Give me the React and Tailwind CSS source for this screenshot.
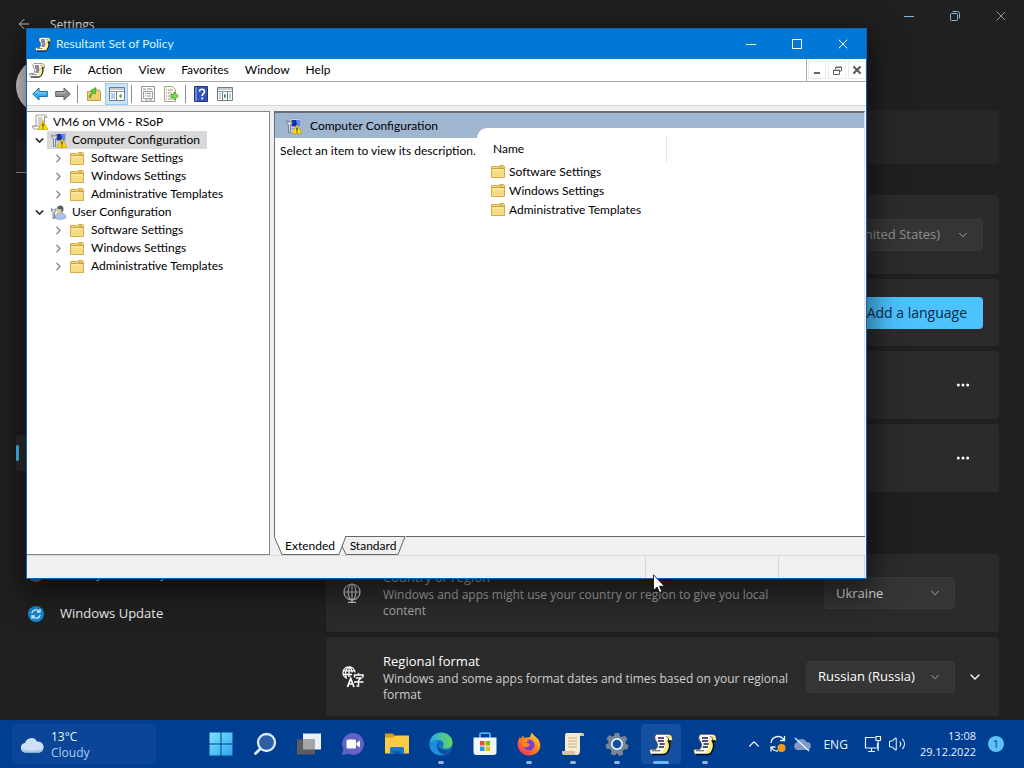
import clsx from "clsx";
import {
  ArrowLeft,
  ChevronDown,
  ChevronRight,
  ChevronUp,
  Ellipsis,
  Volume2,
  X,
} from "lucide-react";

function ScrollIcon({ className }) {
  return (
    <svg viewBox="0 0 32 32" className={className} aria-hidden="true">
      <path
        d="M10 3h15c4 0 6 2 6 6v3h-4c2 4 2 8-1 12-1 4-3 6-7 6H5c-3 0-4-2-4-5v-2h8c3-4 3-6 1-10-3-4-3-8 0-10z"
        fill="#fffdf2"
        stroke="#3a3a44"
        strokeWidth="1"
      />
      <path d="M20 11h5c3 5 2 9-1 13-1 3-2 5-6 5 0-3 1-4 2-6 3-4 2-8 0-12z" fill="#f5f070" />
      <path d="M24 4c4 0 6 2 6 7h-4c0-3 0-5-2-7z" fill="#f5f070" />
      <path d="M30 12h-4c3 5 2 8 0 12-1 4-4 6-7 6H4" stroke="#0a0a14" strokeWidth="2" fill="none" />
      <path d="M26 11c0-3-1-5-3-5M4 25h11" stroke="#3a3a44" strokeWidth="1.2" fill="none" />
      <path d="M12 8h8M12 12h8M14 16h7M13 20h7" stroke="#1c1560" strokeWidth="2.2" />
    </svg>
  );
}

function Warning() {
  return (
    <g>
      <path d="M22 13l10 18H12z" fill="#ffe000" stroke="#b58a00" />
      <path d="M22 19v6M22 27v2" stroke="#222" strokeWidth="2.4" />
    </g>
  );
}

function PolicyRootIcon() {
  return (
    <svg viewBox="0 0 32 32" className="w-4 h-4 shrink-0" aria-hidden="true">
      <path d="M8 2h18c3 0 4 2 4 5h-5v17c0 4-2 6-5 6H5c-3 0-4-3-4-6h7z" fill="#f7f7ee" stroke="#8c8c80" strokeWidth="1.6" />
      <path d="M1 24h14c0 4 1 6 4 6M25 7V4" stroke="#8c8c80" strokeWidth="1.6" fill="none" />
      <path d="M12 8h9M12 12h9M12 16h7M12 20h5" stroke="#9a9a9a" strokeWidth="1.6" />
      <Warning />
    </svg>
  );
}

function ComputerIcon() {
  return (
    <svg viewBox="0 0 32 32" className="w-4 h-4 shrink-0" aria-hidden="true">
      <path d="M8 2h21v18H8z" fill="#dfe3ee" stroke="#8d94ad" />
      <path d="M11 4h16v13H11z" fill="#1430b0" />
      <path d="M20 4h7v13h-4z" fill="#5a86e8" />
      <path d="M10 23h18v6H10z" fill="#c9cede" />
      <path d="M2 5v6l3 3v15h4V14l3-3V5L9 8H5z" fill="#d8dbe2" stroke="#5b6070" strokeWidth="1.4" />
      <Warning />
    </svg>
  );
}

function UserIcon() {
  return (
    <svg viewBox="0 0 32 32" className="w-4 h-4 shrink-0" aria-hidden="true">
      <path d="M9 29c-1-8 2-11 9-11s13 4 12 9c-4 4-15 5-21 2z" fill="#a9c4ea" stroke="#6f8fc0" strokeWidth="1.2" />
      <path d="M12 11q0-6 5-6t6 6-5 8-6-8z" fill="#e3c49a" />
      <path d="M12 8c2-7 13-7 13 2 0 4-2 7-4 8 1-5 0-8-3-8-3 0-5 0-6-2z" fill="#4c6068" />
      <path d="M1 9v5l3 3v12h3V17l3-3V9l-3 3H4z" fill="#dfe2e8" stroke="#555b66" strokeWidth="1.4" />
    </svg>
  );
}

function FolderIcon() {
  return (
    <svg viewBox="0 0 14 13" className="w-[14px] h-[13px] shrink-0" aria-hidden="true">
      <path d="M.5 12.500v-11h7l1-1h4l1 1v11z" fill="#f8dc83" stroke="#d3ad49" />
      <path d="M8 3.500h5M1 3.500h6l1.500-1.500h4" stroke="#c79f3f" fill="none" />
      <path d="M1.500 5h11" stroke="#fdf0b8" />
    </svg>
  );
}

const menus = ["File", "Action", "View", "Favorites", "Window", "Help"];

const tree = [
  {
    name: "Computer Configuration",
    Icon: ComputerIcon,
    selected: true,
    children: ["Software Settings", "Windows Settings", "Administrative Templates"],
  },
  {
    name: "User Configuration",
    Icon: UserIcon,
    children: ["Software Settings", "Windows Settings", "Administrative Templates"],
  },
];

function BlueArrow() {
  return (
    <svg viewBox="0 0 16 14" className="w-4 h-[14px]" aria-hidden="true">
      <path d="M.7 7L7 1v3.500h8.300v5H7V13z" fill="#35ade8" stroke="#1f6fa8" />
      <path d="M3 6.500L6 3.500V6h8" stroke="#9be0fb" fill="none" />
    </svg>
  );
}

function GrayArrow() {
  return (
    <svg viewBox="0 0 16 14" className="w-4 h-[14px]" aria-hidden="true">
      <path d="M15.300 7L9 1v3.500H.7v5H9V13z" fill="#8f8f8f" stroke="#5f5f5f" />
      <path d="M1.500 6H10V3.500" stroke="#bdbdbd" fill="none" />
    </svg>
  );
}

function UpFolder() {
  return (
    <svg viewBox="0 0 16 16" className="w-4 h-4" aria-hidden="true">
      <path d="M1.500 14.500v-9h6l1-1.500h5l1 1.500v9z" fill="#f0cf72" stroke="#c49c45" />
      <path d="M3 11c1-3 2-4 3.500-5L4.500 4.500 10 1.500 9.500 8 8 7c-2 1-3 2-3.500 5z" fill="#5fce3a" stroke="#2f8c1c" strokeWidth=".6" />
    </svg>
  );
}

function PaneIcon({ right }) {
  return (
    <svg viewBox="0 0 16 14" className="w-4 h-[14px]" aria-hidden="true">
      <path d="M.5.5h15v13H.5z" fill="#fff" stroke="#6f7c88" />
      <path d="M1 2h14M1 4.500h14" stroke="#8a96a2" />
      {right ? (
        <>
          <path d="M5.500 5v8M10.500 5v8" stroke="#6f7c88" />
          <path d="M2 7h2M2 9h2M2 11h2M12 7h2M12 9h2M12 11h2" stroke="#8b98a4" />
          <path d="M7 6.500L9.500 9 7 11.500z" fill="#3a9c4a" />
        </>
      ) : (
        <>
          <path d="M7.500 5v8" stroke="#6f7c88" />
          <path d="M2 7h4M2 9h4M2 11h4" stroke="#5c9fd8" />
          <path d="M12.500 6.500L10 9l2.500 2.500z" fill="#3a9c4a" />
        </>
      )}
    </svg>
  );
}

function PropertiesIcon() {
  return (
    <svg viewBox="0 0 16 16" className="w-4 h-4" aria-hidden="true">
      <path d="M1.500.5h13v15h-13z" fill="#fbfbfb" stroke="#9a9a9a" />
      <path d="M3.500 5.500h9v7h-9z" stroke="#a0a0a0" fill="none" />
      <path d="M3 3h3M7 3h5M5 7.500h1M7 7.500h4M5 10h1M7 10h4M5 14h3M9 14h3" stroke="#8e9399" />
    </svg>
  );
}

function ExportIcon() {
  return (
    <svg viewBox="0 0 16 16" className="w-4 h-4" aria-hidden="true">
      <path d="M1.500.5h8l3 3v12h-11z" fill="#fdfbe8" stroke="#a6a694" />
      <path d="M3 4h1M5 4h5M3 7h1M5 7h4M3 10h1M5 10h3M3 13h1M5 13h5" stroke="#9a9a9a" />
      <path d="M8 8.500h3V6l4.500 4-4.500 4v-2.500H8z" fill="#7fdc4a" stroke="#3c9a20" strokeWidth=".8" />
    </svg>
  );
}

function HelpIcon() {
  return (
    <svg viewBox="0 0 14 16" className="w-[14px] h-4" aria-hidden="true">
      <path d="M.5.5h13v15H.5z" fill="#3453b4" stroke="#1f3580" />
      <path d="M1 1h2v14H1z" fill="#7289d6" />
      <path d="M5.500 5.500c0-3 5-3 5 0 0 2-2.300 2-2.300 4.500M8.200 11.500v2" stroke="#fff" strokeWidth="1.700" fill="none" />
    </svg>
  );
}

function Separator() {
  return <span className="w-px h-[18px] mx-[3px] bg-[#8c8c8c]" />;
}

function ToolButton({ label, active, children }) {
  return (
    <button
      aria-label={label}
      className={clsx(
        "w-[23px] h-[22px] flex items-center justify-center",
        active && "bg-[#cce4f7] border border-[#99c9ef]",
      )}
    >
      {children}
    </button>
  );
}

function TreeRow({ children, className }) {
  return <div className={clsx("h-[18px] flex items-center whitespace-nowrap", className)}>{children}</div>;
}

function TreePane() {
  return (
    <nav className="w-[243px] shrink-0 bg-white border border-[#828790] border-l-0 pt-px">
      <TreeRow className="pl-[5px] gap-[5px]">
        <PolicyRootIcon />
        <span>VM6 on VM6 - RSoP</span>
      </TreeRow>
      <ul>
        {tree.map(({ name, Icon, selected, children }) => (
          <li key={name}>
            <TreeRow className="pl-[6px]">
              <button aria-label={`Collapse ${name}`}>
                <ChevronDown size={13} strokeWidth={3} className="text-[#333]" />
              </button>
              <button
                className={clsx("h-[18px] flex items-center gap-[5px] pl-1 pr-[7px] ml-px", selected && "bg-[#d9d9d9]")}
              >
                <Icon />
                {name}
              </button>
            </TreeRow>
            <ul>
              {children.map((child) => (
                <li key={child}>
                  <TreeRow className="pl-[25px] gap-[5px]">
                    <button aria-label={`Expand ${child}`}>
                      <ChevronRight size={13} strokeWidth={2.5} className="text-[#8a8a8a]" />
                    </button>
                    <button className="flex items-center gap-[7px]">
                      <FolderIcon />
                      {child}
                    </button>
                  </TreeRow>
                </li>
              ))}
            </ul>
          </li>
        ))}
      </ul>
    </nav>
  );
}

function ResultPane() {
  return (
    <section className="flex-1 min-w-0 flex flex-col mr-px">
      <div className="flex-1 flex bg-[#9fb6d1] border-t-2 border-l border-[#696e78] border-r border-r-[#e3e3e3]">
        <div className="w-[202px] shrink-0 flex flex-col">
          <h2 className="h-[25px] flex items-center gap-2 pl-[11px]">
            <ComputerIcon />
            Computer Configuration
          </h2>
          <p className="flex-1 bg-white pl-[5px] pt-1 whitespace-nowrap leading-[18px]">
            Select an item to view its description.
          </p>
        </div>
        <div className="flex-1 flex mt-[15px] bg-white rounded-tl-[10px]">
          <table className="self-start mt-2 ml-3 text-left">
            <thead>
              <tr>
                <th className="h-[26px] w-[177px] p-0 pl-1 font-normal border-r border-[#e5e5e5]">Name</th>
              </tr>
            </thead>
            <tbody>
              {tree[0].children.map((name) => (
                <tr key={name}>
                  <td className="p-0">
                    <span className="h-[19px] flex items-center gap-1 ml-[2px]">
                      <FolderIcon />
                      {name}
                    </span>
                  </td>
                </tr>
              ))}
            </tbody>
          </table>
        </div>
      </div>
      <div className="h-[19px] flex bg-[#f0f0f0]">
        <button className="relative z-10 w-[72px]">
          <svg viewBox="0 0 72 19" className="absolute inset-0 w-full h-full" aria-hidden="true">
            <path d="M0 0l8 18.500h57L72 0z" fill="#fff" />
            <path d="M0 0l8 18.500h57L72 0" fill="none" stroke="#666" />
          </svg>
          <span className="relative">Extended</span>
        </button>
        <button className="relative -ml-[6px] w-[66px]">
          <svg viewBox="0 0 66 19" className="absolute inset-0 w-full h-full" aria-hidden="true">
            <path d="M1 8l5 10.500h52L65 .5H5" fill="#f0f0f0" stroke="#666" />
          </svg>
          <span className="relative">Standard</span>
        </button>
        <span className="flex-1 border-t border-[#666]" />
      </div>
    </section>
  );
}

function PolicyWindow() {
  return (
    <div className="absolute left-[26px] top-[28px] w-[841px] h-[551px] flex flex-col bg-[#f0f0f0] border border-[#0e62b0] text-black text-[12px] font-['Lato','Open_Sans',sans-serif] shadow-[0_10px_28px_6px_rgba(0,0,0,0.5)]">
      <header className="h-[30px] shrink-0 flex items-center bg-[#0078d7] text-[#d9f4ff] pl-2">
        <ScrollIcon className="w-4 h-4" />
        <h1 className="ml-[5px] flex-1">Resultant Set of Policy</h1>
        <button aria-label="Minimize" className="w-[46px] flex justify-center">
          <span className="w-[10px] h-px bg-white" />
        </button>
        <button aria-label="Maximize" className="w-[46px] flex justify-center">
          <span className="w-[10px] h-[10px] border border-white" />
        </button>
        <button aria-label="Close" className="w-[46px] flex justify-center">
          <X size={16} strokeWidth={1.5} className="text-white" />
        </button>
      </header>

      <div className="h-[23px] shrink-0 flex items-center bg-white border-b border-[#a9a9a9] pl-[2px]">
        <ScrollIcon className="w-4 h-4" />
        {menus.map((m) => (
          <button key={m} className="px-2">
            {m}
          </button>
        ))}
        <div className="ml-auto self-stretch flex items-center gap-[2px] border-l border-[#a9a9a9] text-[#555] pl-px">
          <button aria-label="Minimize child window" className="w-[18px] h-[18px] border border-[#ececec] flex items-end justify-center pb-1">
            <span className="w-[6px] h-[2px] bg-[#666]" />
          </button>
          <button aria-label="Restore child window" className="w-[18px] h-[18px] border border-[#ececec] flex items-center justify-center">
            <svg viewBox="0 0 9 9" className="w-[9px] h-[9px]" fill="none" stroke="#666">
              <path d="M2.500 3V1h6v4H6.500M.5 4h6v4.500h-6zM.5 4.500h6M2.500 1.500h6" />
            </svg>
          </button>
          <button aria-label="Close child window" className="w-[18px] h-[18px] border border-[#ececec] flex items-center justify-center">
            <X size={12} strokeWidth={4} />
          </button>
        </div>
      </div>

      <div className="h-[24px] shrink-0 flex items-center bg-white border-b border-[#d5d5d5] pl-px pt-px">
        <ToolButton label="Back"><BlueArrow /></ToolButton>
        <ToolButton label="Forward"><GrayArrow /></ToolButton>
        <Separator />
        <span className="w-px" />
        <ToolButton label="Up one level"><UpFolder /></ToolButton>
        <ToolButton label="Show console tree" active><PaneIcon /></ToolButton>
        <Separator />
        <span className="w-px" />
        <ToolButton label="Properties"><PropertiesIcon /></ToolButton>
        <ToolButton label="Export list"><ExportIcon /></ToolButton>
        <Separator />
        <ToolButton label="Help"><HelpIcon /></ToolButton>
        <span className="w-px" />
        <ToolButton label="Show action pane"><PaneIcon right /></ToolButton>
      </div>

      <div className="flex-1 min-h-0 flex gap-1 pt-[5px]">
        <TreePane />
        <ResultPane />
      </div>

      <footer className="h-[23px] shrink-0 flex border-t border-[#dadada] pr-px">
        <span className="flex-1 border-r border-[#d7d7d7]" />
        <span className="w-[133px] border-r border-[#d7d7d7]" />
        <span className="w-[86px] border-r border-[#d7d7d7]" />
      </footer>
    </div>
  );
}

function Dropdown({ label, value, className }) {
  return (
    <label className={clsx("relative flex items-center h-8", className)}>
      <select
        aria-label={label}
        className="appearance-none w-full h-8 pl-[11px] pr-9 pt-px rounded bg-[#353535] border border-[#3a3a3a] text-[13px]"
      >
        <option>{value}</option>
      </select>
      <ChevronDown size={14} strokeWidth={1.5} className="absolute right-[13px] pointer-events-none text-[#b5b5b5]" />
    </label>
  );
}

function Card({ className, children }) {
  return (
    <div className={clsx("shrink-0 flex items-center bg-[#2b2b2b] rounded-[4px]", className)}>
      {children}
    </div>
  );
}

function GlobeIcon() {
  return (
    <svg viewBox="0 0 20 20" className="w-5 h-5 shrink-0 text-[#cfcfcf]" fill="none" stroke="currentColor" strokeWidth="1.2">
      <circle cx="10" cy="9" r="8" />
      <ellipse cx="10" cy="9" rx="3.800" ry="8" />
      <path d="M2 9h16M10 1v18M6 19.300h8" />
    </svg>
  );
}

function RegionalIcon() {
  return (
    <svg viewBox="0 0 22 22" className="w-[22px] h-[22px] shrink-0" fill="none" stroke="#fff" strokeWidth="1.300">
      <path d="M5 12.500A6 6 0 1 1 13 6.500M1.500 4.800h11M1 8.500h9M7 1v10M4.300 11.500c-1.500-5-.5-9 2.700-10.500 2 1 3 3 3 5.500" />
      <path d="M5.500 21l3.200-8.500L12 21M6.600 18h4.400" strokeWidth="1.700" />
      <path d="M16.500 7v2M12.500 11.500V9h8.500v2.500M14 12h5l-2.500 2.500V20h-2M12 16h9.500" strokeWidth="1.500" />
    </svg>
  );
}

function SettingsWindow() {
  return (
    <main className="flex-1 min-h-0 flex flex-col overflow-hidden bg-[#202020] text-white">
      <header className="h-12 shrink-0 flex items-center pl-4">
        <button aria-label="Back">
          <ArrowLeft size={16} strokeWidth={1.5} className="text-[#c4c4c4]" />
        </button>
        <span className="ml-[18px] pt-[2px] text-[12px] text-[#e6e6e6]">Settings</span>
        <div className="ml-auto self-start h-8 flex items-center text-[#a9b6c4]">
          <button aria-label="Minimize Settings" className="w-[46px] flex justify-center">
            <span className="w-[10px] h-px bg-[#7fb2de]" />
          </button>
          <button aria-label="Restore Settings" className="w-[46px] flex justify-center">
            <svg viewBox="0 0 10 10" className="w-[10px] h-[10px]" fill="none" stroke="#8db4d8">
              <path d="M2.500.5h5a2 2 0 0 1 2 2v5" />
              <rect x=".5" y="2.500" width="7" height="7" rx="1" />
            </svg>
          </button>
          <button aria-label="Close Settings" className="w-[46px] flex justify-center">
            <X size={16} strokeWidth={1.2} />
          </button>
        </div>
      </header>

      <div className="flex-1 min-h-0 flex">
        <aside className="w-[326px] shrink-0 pl-4 pr-5 pt-[10px] text-[13px]">
          <div className="w-14 h-14 rounded-full bg-[#d4d4d4]" />
          <div className="mt-[27px] h-8 bg-[#262626] border-b border-[#9a9a9a]" />
          <nav className="mt-[262px] flex flex-col">
            <div className="h-9 flex items-center rounded bg-[#2d2d2d]">
              <span className="w-[3px] h-4 rounded-full bg-[#4cc2ff]" />
            </div>
            <button className="mt-[85px] h-9 flex items-center gap-4 pl-3 text-[#e0e0e0]">
              <span className="w-4 h-4 rounded-full bg-[#2f6ea6]" />
              Privacy &amp; security
            </button>
            <button className="mt-1 h-9 flex items-center gap-4 pl-3 text-[#f0f0f0]">
              <svg viewBox="0 0 16 16" className="w-4 h-4" fill="none" aria-hidden="true">
                <circle cx="8" cy="8" r="8" fill="#1687cf" />
                <path d="M3.800 7.200A4.300 4.300 0 0 1 11.500 5.600M12.200 8.800A4.300 4.300 0 0 1 4.500 10.400" stroke="#d8f3ff" strokeWidth="1.300" />
                <path d="M12 3v3H9M4 13v-3h3" stroke="#d8f3ff" strokeWidth="1.300" />
              </svg>
              Windows Update
            </button>
          </nav>
        </aside>

        <section className="flex-1 min-w-0 flex flex-col pt-[62px] pr-[25px]">
          <Card className="h-[54px] mb-[31px] bg-[#272727]" />
          <Card className="h-[79px] mb-[5px] justify-end pr-4">
            <Dropdown label="Windows display language" value="English (United States)" className="w-[190px] text-[#909090]" />
          </Card>
          <Card className="h-[67px] mb-[5px] justify-end pr-4">
            <button className="h-8 px-4 rounded bg-[#4cc2ff] text-[14px] text-[#0a2b40]">Add a language</button>
          </Card>
          {["First language", "Second language"].map((l) => (
            <Card key={l} className="h-[68px] mb-[5px] justify-end pr-7">
              <button aria-label={`${l} options`}>
                <Ellipsis size={16} strokeWidth={2.5} />
              </button>
            </Card>
          ))}
          <Card className="h-[78px] mt-[57px] mb-[5px] pl-4 pr-11">
            <GlobeIcon />
            <div className="ml-[21px] flex-1 text-[#a8a8a8]">
              <h3 className="text-[13px] leading-5">Country or region</h3>
              <p className="max-w-[410px] text-[12px] leading-4">
                Windows and apps might use your country or region to give you local content
              </p>
            </div>
            <Dropdown label="Country or region" value="Ukraine" className="w-[131px] text-[#dcdcdc]" />
          </Card>
          <Card className="h-[79px] pl-4 pr-4">
            <RegionalIcon />
            <div className="ml-[19px] flex-1">
              <h3 className="text-[13px] leading-5">Regional format</h3>
              <p className="max-w-[410px] text-[12px] leading-4 text-[#cfcfcf]">
                Windows and some apps format dates and times based on your regional format
              </p>
            </div>
            <Dropdown label="Regional format" value="Russian (Russia)" className="w-[149px]" />
            <button aria-label="Expand regional format" className="ml-3">
              <ChevronDown size={16} strokeWidth={2} />
            </button>
          </Card>
        </section>
      </div>
    </main>
  );
}

function StartIcon() {
  return (
    <svg viewBox="0 0 24 24" className="w-6 h-6">
      <defs>
        <linearGradient id="start" x1="0" y1="0" x2="1" y2="1">
          <stop offset="0" stopColor="#7be4fd" />
          <stop offset="1" stopColor="#2fa5ec" />
        </linearGradient>
      </defs>
      <path d="M.5.5h11v11H.5zM12.500.5h11v11h-11zM.5 12.500h11v11H.5zM12.500 12.500h11v11h-11z" fill="url(#start)" />
    </svg>
  );
}

function SearchIcon() {
  return (
    <svg viewBox="0 0 24 24" className="w-6 h-6" fill="none">
      <circle cx="13.500" cy="10.500" r="8.500" fill="#2d5fa5" stroke="#dde9f5" strokeWidth="2.300" />
      <path d="M7.300 16.700L2.500 21.500" stroke="#dde9f5" strokeWidth="2.800" strokeLinecap="round" />
    </svg>
  );
}

function TaskViewIcon() {
  return (
    <svg viewBox="0 0 24 24" className="w-6 h-6">
      <path d="M6 1.500h18v16H6z" fill="#eceff3" />
      <path d="M0 7.500h18v15H0z" fill="#5c5c5e" />
      <path d="M6 7.500h12v10H6z" fill="#a5a6a8" />
    </svg>
  );
}

function ChatIcon() {
  return (
    <svg viewBox="0 0 24 24" className="w-6 h-6">
      <path d="M12 1a11 11 0 1 1-5 20.800L1 23l1.300-6A11 11 0 0 1 12 1z" fill="#6264c4" />
      <rect x="5.500" y="7.500" width="9.500" height="9" rx="1.500" fill="#fff" />
      <path d="M15.500 11l3.500-2.500v7L15.500 13z" fill="#fff" />
    </svg>
  );
}

function ExplorerIcon() {
  return (
    <svg viewBox="0 0 24 24" className="w-6 h-6">
      <path d="M0 1.500h8l2 2.500v4H0z" fill="#d99a18" />
      <path d="M0 5.500h8l2-2h14v18H0z" fill="#fbcb45" />
      <path d="M5 22v-5.500q0-1.500 1.500-1.500h11q1.500 0 1.500 1.500V22z" fill="#1976c9" />
      <path d="M8 19h8v3H8z" fill="#0e5aa5" />
    </svg>
  );
}

function EdgeIcon() {
  return (
    <svg viewBox="0 0 24 24" className="w-6 h-6">
      <defs>
        <linearGradient id="edgeTop" x1="0" y1="0" x2="1" y2="0">
          <stop offset="0" stopColor="#28a6e8" />
          <stop offset="1" stopColor="#63d85a" />
        </linearGradient>
      </defs>
      <circle cx="12" cy="12" r="11.500" fill="#1672c4" />
      <path d="M.7 11C1.500 4 6.500.5 12 .5c7 0 11.500 5 11.500 10 0 4-3 6-6.500 6-2.500 0-3.800-1-3.300-2 2.300-3 0-6.500-4-6.500-4 0-7.500 1-9 3z" fill="url(#edgeTop)" />
      <path d="M9.500 9c-4 4-1 12 6 13.500C6 25-.5 18.500.6 11.500 2.500 8.500 6 8 9.500 9z" fill="#1b8fdc" />
      <path d="M9.500 10.500c-2 5 3 9.500 11.500 7-1 2-3 4-5.500 5-6-1-9-8-6-12z" fill="#114a94" />
    </svg>
  );
}

function StoreIcon() {
  return (
    <svg viewBox="0 0 24 24" className="w-6 h-6">
      <path d="M7 6V2.500q0-1.300 1.300-1.300h7.400q1.300 0 1.300 1.300V6" fill="none" stroke="#42b5ee" strokeWidth="1.800" />
      <path d="M.5 5.500h23V20q0 3-3 3h-17q-3 0-3-3z" fill="#f3f6f9" />
      <path d="M7 9h4.500v4.500H7z" fill="#f04e24" />
      <path d="M12.500 9H17v4.500h-4.500z" fill="#80b81c" />
      <path d="M7 14.500h4.500V19H7z" fill="#18a0e6" />
      <path d="M12.500 14.500H17V19h-4.500z" fill="#f9b912" />
    </svg>
  );
}

function FirefoxIcon() {
  return (
    <svg viewBox="0 0 24 24" className="w-6 h-6">
      <defs>
        <linearGradient id="fox" x1="1" y1="0" x2="0.200" y2="1">
          <stop offset="0" stopColor="#ffe23c" />
          <stop offset="0.500" stopColor="#ff8a1e" />
          <stop offset="1" stopColor="#f0325c" />
        </linearGradient>
      </defs>
      <path d="M15 .5c1 2.500 3 3.500 5 5.500 2 1.500 3.500 5 3.300 8C22.700 20 18 23.500 12 23.500 5.500 23.500.7 18.500.7 12.500c0-3 .8-5.500 2.300-7.500l1 2 1.500-3.500L7.500 6c3-.8 5-.5 5.500-1 .5-1.500 1-3.300 2-4.500z" fill="url(#fox)" />
      <circle cx="12" cy="13" r="5.500" fill="#7b3fd1" />
      <path d="M5 9c2-2 5-2 7 0-1.500 0-2.500 1-3 2 2 0 3 .5 4 1.500-2 3-4 3-6 2-1.500-1-2-3-2-5.500z" fill="#ff8a1e" />
    </svg>
  );
}

function PaperIcon() {
  return (
    <svg viewBox="0 0 24 24" className="w-6 h-6">
      <path d="M5 1h16q2 0 2 3h-4v14q0 5-3 5H3q-2 0-2-4h3V4q0-2 1-3z" fill="#f6ead0" />
      <path d="M19 4q0-3 2-3t2 3zM1 19h13q0 4 2 4H3q-2 0-2-4z" fill="#d8c49b" />
      <path d="M7 6h9M7 9h9M7 12h9M7 15h9" stroke="#c4ae86" strokeWidth="1.200" />
    </svg>
  );
}

function GearIcon() {
  return (
    <svg viewBox="0 0 24 24" className="w-6 h-6">
      <path
        d="M9.800 1h4.400l.7 3.200 2 .9 2.900-1.700 2.800 3.700-2.100 2.600.3 2.100 2.700 1.400-1.200 4.300-3.300.1-1.400 1.600.7 3.200-4.200 1.500L12 21l-2.100 2.400-4.200-1.500.7-3.200L5 17.100l-3.300-.1L.5 12.700l2.700-1.400.3-2.100L1.400 6.600l2.800-3.700 2.900 1.700 2-.9z"
        fill="#788492"
      />
      <circle cx="12" cy="12" r="6" fill="#dff2ff" />
      <circle cx="12" cy="12" r="4.300" fill="#144f9c" />
    </svg>
  );
}

const apps = [
  { name: "Start", Icon: StartIcon },
  { name: "Search", Icon: SearchIcon },
  { name: "Task View", Icon: TaskViewIcon },
  { name: "Chat", Icon: ChatIcon },
  { name: "File Explorer", Icon: ExplorerIcon },
  { name: "Edge", Icon: EdgeIcon, running: true },
  { name: "Store", Icon: StoreIcon },
  { name: "Firefox", Icon: FirefoxIcon, running: true },
  { name: "Script", Icon: PaperIcon, running: true },
  { name: "Settings", Icon: GearIcon, running: true },
  { name: "Resultant Set of Policy", Icon: ScrollIcon, active: true },
  { name: "Policy console", Icon: ScrollIcon, running: true },
];

function Taskbar() {
  return (
    <footer className="h-12 shrink-0 flex items-center bg-[#003e92] text-[#e6f4ff] pl-3 pr-5">
      <button className="w-[144px] h-10 flex items-center gap-[7px] pl-2 pt-[2px] rounded bg-[#0a4597] text-left text-[12px] leading-4">
        <svg viewBox="0 0 24 16" className="w-6 h-4" aria-hidden="true">
          <path d="M5 15.500a4.800 4.800 0 0 1 0-9.500A6.500 6.500 0 0 1 17 4.500a5.500 5.500 0 0 1 2 11z" fill="#cfdff5" />
          <path d="M1 12q2 3.500 5 3.500h13q3.500 0 4.500-4-3 2-8 1.500-5 1.500-14.500-1z" fill="#a9c3ea" />
        </svg>
        <span>
          13°C
          <br />
          <span className="text-[#a9cdf2]">Cloudy</span>
        </span>
      </button>

      <nav className="ml-[45px] flex gap-1">
        {apps.map(({ name, Icon, running, active }) => (
          <button
            key={name}
            aria-label={name}
            className={clsx(
              "relative w-10 h-10 flex items-center justify-center rounded",
              active && "bg-[#14509f]",
            )}
          >
            <Icon className="w-6 h-6" />
            {running && <span className="absolute bottom-0 w-[6px] h-[3px] rounded-full bg-[#8fb8dd]" />}
            {active && <span className="absolute bottom-0 w-4 h-[3px] rounded-full bg-[#63bdf5]" />}
          </button>
        ))}
      </nav>

      <div className="ml-auto flex items-center text-[12px] leading-4">
        <button aria-label="Show hidden icons">
          <ChevronUp size={18} strokeWidth={1.5} />
        </button>
        <svg viewBox="0 0 18 18" className="w-[18px] h-[18px] ml-[6px]" fill="none" stroke="#e6f4ff" strokeWidth="1.300">
          <path d="M2 8a7 7 0 0 1 13-3M15.500 1v4.500H11M2 16.500V12h4.500M2.500 12.500A7 7 0 0 0 9 16" />
          <circle cx="12.500" cy="13" r="4" fill="#f79a1c" stroke="none" />
        </svg>
        <svg viewBox="0 0 18 16" className="w-[18px] h-4 ml-[6px]">
          <path d="M4 14a4 4 0 0 1-.5-7.500A5.500 5.500 0 0 1 13.500 6a4 4 0 0 1 .5 8z" fill="#8199c4" />
          <path d="M2 2l14 13" stroke="#e6f4ff" strokeWidth="1.300" />
        </svg>
        <span className="ml-3 pt-px">ENG</span>
        <svg viewBox="0 0 18 18" className="w-[18px] h-[18px] ml-4" fill="none" stroke="#e6f4ff" strokeWidth="1.200">
          <path d="M10.500 2.500H1.500v10.500h12V8M7.500 13v3.500M4 16.500h7M12 1.500h4.500v4H12zM14.200 5.500V16" />
        </svg>
        <Volume2 size={18} strokeWidth={1.400} className="ml-[6px]" />
        <button className="ml-[14px] text-right text-[11px]">
          13:08
          <br />
          29.12.2022
        </button>
        <button className="ml-3 w-4 h-4 rounded-full bg-[#5fc0fa] text-[#0b3c78] text-[11px] leading-4">1</button>
      </div>
    </footer>
  );
}

export default function App() {
  return (
    <div className="relative h-screen flex flex-col overflow-hidden font-['Open_Sans','Noto_Sans',sans-serif]">
      <SettingsWindow />
      <Taskbar />
      <PolicyWindow />
      <svg viewBox="0 0 12 19" className="absolute left-[653px] top-[574px] w-3 h-[19px]" aria-hidden="true">
        <path d="M.5.8v15.700l3.700-3.500 2.400 5.500 2.300-1-2.400-5.300h5z" fill="#fff" stroke="#000" strokeWidth=".8" />
      </svg>
    </div>
  );
}
